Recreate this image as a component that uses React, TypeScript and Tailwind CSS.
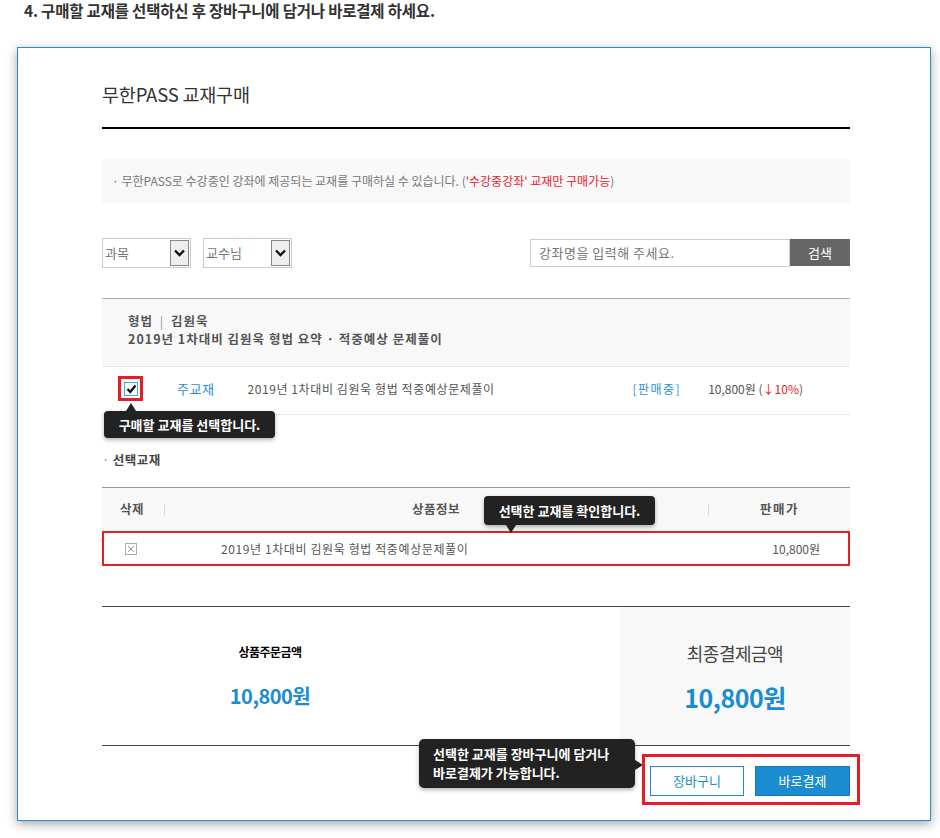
export default function App() {
  return (
    <div className="w-[940px] h-[838px] bg-white font-['Noto_Sans_CJK_KR','Noto_Sans',sans-serif] text-[#333] overflow-hidden">
      <div className="pl-[24px] pt-[1px] text-[15.5px] leading-[19px] font-bold text-[#333] tracking-[-0.2px]">
        4. 구매할 교재를 선택하신 후 장바구니에 담거나 바로결제 하세요.
      </div>
      <div className="relative ml-[17px] mt-[27px] w-[914px] h-[774px] border border-[#2b8ccc] bg-white shadow-[0_3px_10px_rgba(0,0,0,0.35)]">
        <div className="ml-[84px] w-[748px] pt-[34px]">
          <div className="text-[18.5px] leading-[24px] text-[#333] tracking-[-0.2px]">무한PASS 교재구매</div>
          <div className="mt-[21px] h-[2px] bg-black" />
          <div className="mt-[30px] h-[44px] bg-[#f8f8f8] flex items-center pl-[10px] text-[12px] text-[#777] tracking-[0px]">
            · 무한PASS로 수강중인 강좌에 제공되는 교재를 구매하실 수 있습니다. (<span className="text-[#e8202a]">'수강중강좌' 교재만 구매가능</span>)
          </div>
          <div className="mt-[35px] h-[30px] flex items-center">
            <div className="w-[89px] h-[30px] border border-[#ccc] flex items-center justify-between">
              <span className="pl-[2px] text-[13px] text-[#777]">과목</span>
              <span className="w-[19px] h-[26px] mr-[1px] bg-[#eee] border border-[#888] flex items-center justify-center">
                <svg width="11" height="8" viewBox="0 0 11 8"><path d="M1 1.5 L5.5 6 L10 1.5" stroke="#111" strokeWidth="2.4" fill="none" /></svg>
              </span>
            </div>
            <div className="ml-[12px] w-[89px] h-[30px] border border-[#ccc] flex items-center justify-between">
              <span className="pl-[2px] text-[13px] text-[#777]">교수님</span>
              <span className="w-[19px] h-[26px] mr-[1px] bg-[#eee] border border-[#888] flex items-center justify-center">
                <svg width="11" height="8" viewBox="0 0 11 8"><path d="M1 1.5 L5.5 6 L10 1.5" stroke="#111" strokeWidth="2.4" fill="none" /></svg>
              </span>
            </div>
            <div className="ml-auto flex h-[28px]">
              <div className="w-[260px] h-[28px] border border-[#ccc] flex items-center pl-[8px] text-[13px] text-[#777] tracking-[0.5px]">강좌명을 입력해 주세요.</div>
              <div className="w-[60px] h-[27px] bg-[#666] text-white text-[13px] flex items-center justify-center">검색</div>
            </div>
          </div>
          <div className="mt-[30px] border-t border-[#aaa]">
            <div className="h-[67px] bg-[#f8f8f8] pl-[26px] pt-[13px] text-[12.5px] leading-[18px] font-bold text-[#555] tracking-[1px]">
              <div>형법 <span className="font-normal text-[#999] mx-[3px]">|</span> 김원욱</div>
              <div>2019년 1차대비 김원욱 형법 요약 · 적중예상 문제풀이</div>
            </div>
            <div className="h-[49px] border-t border-b border-[#e8e8e8] flex items-center pb-[3px] text-[12px] text-[#555]">
              <div className="ml-[22px] w-[14px] h-[14px] border border-[#4aa8de] bg-white flex items-center justify-center">
                <svg width="11" height="10" viewBox="0 0 11 10"><path d="M1.5 5 L4.2 8 L9.5 1.5" stroke="#111" strokeWidth="2.2" fill="none" /></svg>
              </div>
              <span className="ml-[39px] text-[13px] text-[#2a8fd0] tracking-[0.5px]">주교재</span>
              <span className="ml-[33px] tracking-[0.6px]">2019년 1차대비 김원욱 형법 적중예상문제풀이</span>
              <span className="ml-auto text-[#2a8fd0] tracking-[1.5px]">[판매중]</span>
              <span className="ml-[27px] mr-[47px]">10,800원 (<span className="text-[#e8202a]">↓10%</span>)</span>
            </div>
          </div>
          <div className="mt-[36px] text-[12.5px] leading-[18px] font-bold text-[#444] tracking-[0.5px]"><span className="font-normal text-[#999]">·</span> 선택교재</div>
          <div className="mt-[18px] border-t border-[#999]">
            <div className="h-[43px] bg-[#f8f8f8] flex items-center text-[12.5px] font-bold text-[#555]">
              <span className="ml-[18px] tracking-[0.5px]">삭제</span>
              <span className="ml-[20px] w-px h-[12px] bg-[#ddd]" />
              <span className="ml-[247px] tracking-[0.5px]">상품정보</span>
              <span className="ml-[248px] w-px h-[12px] bg-[#ddd]" />
              <span className="ml-[51px] tracking-[1.5px]">판매가</span>
            </div>
            <div className="h-[35px] border-2 border-[#e31e25] flex items-center text-[12px] text-[#555]">
              <div className="ml-[21px] w-[12px] h-[12px] border border-[#aaa] flex items-center justify-center">
                <svg width="8" height="8" viewBox="0 0 8 8"><path d="M1 1 L7 7 M7 1 L1 7" stroke="#999" strokeWidth="1" /></svg>
              </div>
              <span className="ml-[84px] tracking-[0.6px]">2019년 1차대비 김원욱 형법 적중예상문제풀이</span>
              <span className="ml-auto mr-[28px]">10,800원</span>
            </div>
          </div>
          <div className="mt-[40px] h-[140px] border-t border-b border-[#444] flex">
            <div className="w-[336px] flex flex-col items-center pt-[37px]">
              <div className="text-[12px] font-bold text-black leading-[16px] tracking-[-0.5px]">상품주문금액</div>
              <div className="mt-[24px] text-[20px] font-bold text-[#1a8ccf] leading-[24px] tracking-[-0.5px]">10,800원</div>
            </div>
            <div className="ml-auto w-[230px] bg-[#f8f8f8] flex flex-col items-center pt-[34px]">
              <div className="text-[18px] text-[#444] leading-[24px] tracking-[-0.5px]">최종결제금액</div>
              <div className="mt-[17px] text-[25px] font-bold text-[#1a8ccf] leading-[30px] tracking-[-0.5px]">10,800원</div>
            </div>
          </div>
          <div className="mt-[20px] flex justify-end gap-[11px]">
            <div className="w-[94px] h-[30px] border border-[#1a8ccf] bg-white text-[#1a8ccf] text-[13px] flex items-center justify-center">장바구니</div>
            <div className="w-[95px] h-[30px] bg-[#1a8ccf] border border-[#1479b5] text-white text-[13px] flex items-center justify-center">바로결제</div>
          </div>
        </div>

        {/* annotation: checkbox highlight */}
        <div className="absolute left-[100px] top-[328px] w-[25px] h-[25px] border-[3px] border-[#e31e25]" />
        {/* tooltip 1 */}
        <div className="absolute left-[86px] top-[363px] w-[171px] h-[27px] rounded-[4px] bg-[#222] text-white text-[13px] font-bold flex items-center justify-center shadow-[0_2px_4px_rgba(0,0,0,0.3)]">
          구매할 교재를 선택합니다.
          <span className="absolute left-[22px] top-[-8px] w-0 h-0 border-l-[5px] border-r-[5px] border-b-[8px] border-l-transparent border-r-transparent border-b-[#222]" />
        </div>
        {/* tooltip 2 */}
        <div className="absolute left-[466px] top-[448px] w-[171px] h-[29px] rounded-[4px] bg-[#222] text-white text-[13px] font-bold flex items-center justify-center shadow-[0_2px_4px_rgba(0,0,0,0.3)]">
          선택한 교재를 확인합니다.
          <span className="absolute left-[22px] bottom-[-8px] w-0 h-0 border-l-[5px] border-r-[5px] border-t-[8px] border-l-transparent border-r-transparent border-t-[#222]" />
        </div>
        {/* tooltip 3 */}
        <div className="absolute left-[401px] top-[691px] w-[216px] h-[49px] rounded-[5px] bg-[#222] text-white text-[13px] font-bold leading-[19px] pl-[14px] pt-[5px] shadow-[0_2px_4px_rgba(0,0,0,0.3)]">
          <div>선택한 교재를 장바구니에 담거나</div>
          <div>바로결제가 가능합니다.</div>
          <span className="absolute right-[-8px] top-[21px] w-0 h-0 border-t-[5px] border-b-[5px] border-l-[8px] border-t-transparent border-b-transparent border-l-[#222]" />
        </div>
        {/* annotation: buttons highlight */}
        <div className="absolute left-[624px] top-[706px] w-[218px] h-[51px] border-[3px] border-[#e31e25]" />
      </div>
    </div>
  );
}
